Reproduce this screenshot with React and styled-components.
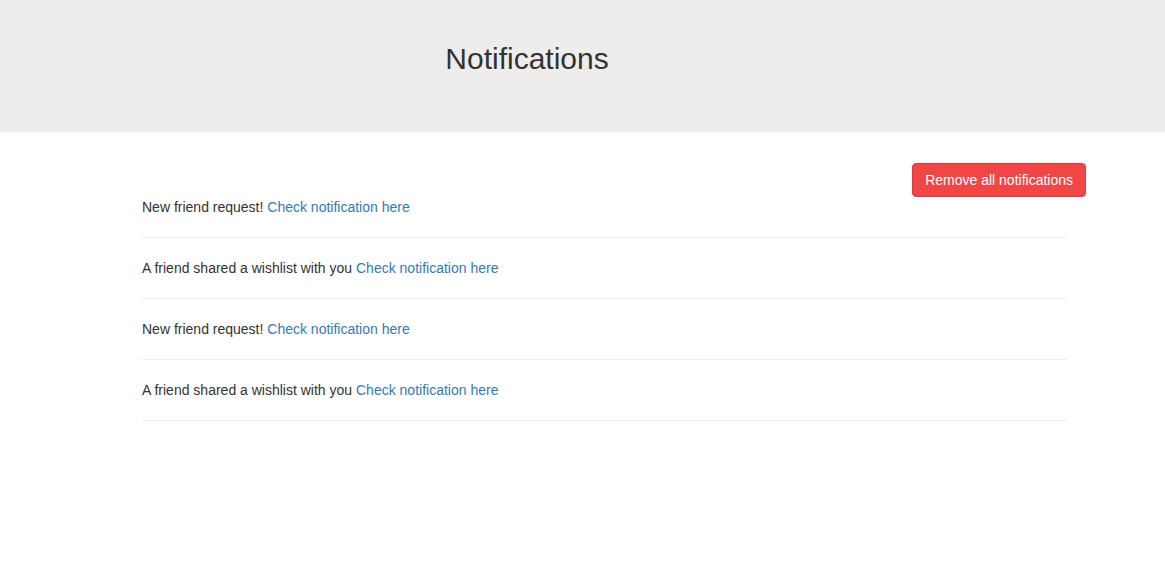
import React from 'react'
import styled, { createGlobalStyle } from 'styled-components'

const GlobalStyle = createGlobalStyle`
    body {
        margin: 0;
        font-family: "Liberation Sans", Arial, sans-serif;
        font-size: 14px;
        line-height: 20px;
        color: #333;
        background: #fff;
    }
`

const notifications = [
    { text: 'New friend request!' },
    { text: 'A friend shared a wishlist with you' },
    { text: 'New friend request!' },
    { text: 'A friend shared a wishlist with you' }
]

const App = () => {
    return (
        <div>
            <GlobalStyle />
            <Header>
                <Title>Notifications</Title>
            </Header>
            <Main>
                <ButtonRow>
                    <RemoveButton>Remove all notifications</RemoveButton>
                </ButtonRow>
                <List>
                    {notifications.map((item, index) => (
                        <Item key={index}>
                            {item.text} <Link href="#">Check notification here</Link>
                        </Item>
                    ))}
                </List>
            </Main>
        </div>
    )
}

export default App

const Header = styled.header`
    height: 132px;
    box-sizing: border-box;
    background-color: #eeedeb;
    display: flex;
    justify-content: center;
    padding-top: 42px;
    padding-right: 111px;
`

const Title = styled.h1`
    margin: 0;
    font-size: 30px;
    font-weight: 400;
    line-height: 33px;
    color: #333;
`

const Main = styled.main`
    padding: 31px 79px 0 142px;
`

const ButtonRow = styled.div`
    display: flex;
    justify-content: flex-end;
`

const RemoveButton = styled.button`
    height: 34px;
    box-sizing: border-box;
    padding: 6px 12px;
    font-family: inherit;
    font-size: 14px;
    line-height: 20px;
    color: #fff;
    background-color: #f04646;
    border: 1px solid #e53535;
    border-radius: 4px;
    cursor: pointer;
`

const List = styled.div`
    margin-right: 19px;
`

const Item = styled.div`
    padding: 20px 0;
    border-bottom: 1px solid #eee;
    &:first-child {
        padding-top: 0;
    }
`

const Link = styled.a`
    color: #337ab7;
    text-decoration: none;
`
